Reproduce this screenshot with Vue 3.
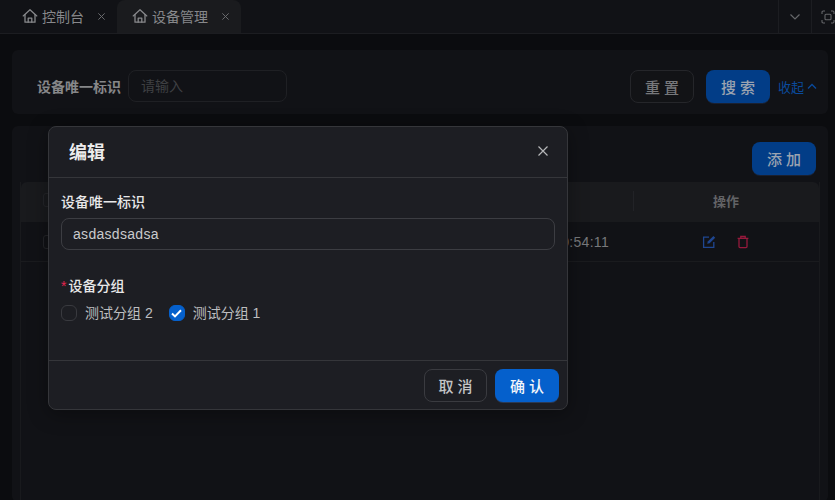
<script setup>
import { ref } from 'vue'
const name = ref('asdasdsadsa')
const groups = [
  { label: '测试分组 2', on: false },
  { label: '测试分组 1', on: true }
]
const tabs = [
  { label: '控制台', active: false },
  { label: '设备管理', active: true }
]
</script>

<template>
  <div class="page">
    <header class="tabbar">
      <div class="tabs">
        <div v-for="t in tabs" :key="t.label" class="tab" :class="{ active: t.active }">
          <svg class="home" viewBox="0 0 16 16" fill="none" stroke="currentColor" stroke-width="1.3" stroke-linejoin="round" stroke-linecap="round">
            <path d="M1.2 7.9 8 1.8l6.8 6.1" />
            <path d="M3 6.6v7.6h10V6.6" />
            <path d="M6.2 14.2V10.2h3.6v4" />
          </svg>
          <span class="tab-label">{{ t.label }}</span>
          <svg class="tab-x" viewBox="0 0 10 10" fill="none" stroke="currentColor" stroke-width="1.1"><path d="M1.5 1.5l7 7M8.5 1.5l-7 7" /></svg>
        </div>
      </div>
      <div class="tools">
        <div class="tool">
          <svg width="12" height="8" viewBox="0 0 12 8" fill="none" stroke="currentColor" stroke-width="1.2"><path d="M1.5 1.5 6 6l4.5-4.5" /></svg>
        </div>
        <div class="tool wide">
          <svg width="14" height="14" viewBox="0 0 14 14" fill="none" stroke="currentColor" stroke-width="1.1">
            <path d="M1 4V2.2C1 1.5 1.5 1 2.2 1H4M10 1h1.8c.7 0 1.2.5 1.2 1.2V4M13 10v1.8c0 .7-.5 1.2-1.2 1.2H10M4 13H2.2C1.5 13 1 12.5 1 11.8V10" />
            <rect x="4" y="4.2" width="6" height="5.6" rx="1" />
          </svg>
        </div>
      </div>
    </header>

    <main class="content">
      <section class="card search">
        <label class="search-label">设备唯一标识</label>
        <div class="search-input">请输入</div>
        <div class="search-actions">
          <button class="btn ghost">重 置</button>
          <button class="btn primary">搜 索</button>
          <span class="collapse">收起
            <svg width="10" height="7" viewBox="0 0 10 7" fill="none" stroke="currentColor" stroke-width="1.3"><path d="M1 5.5 5 1.5l4 4" /></svg>
          </span>
        </div>
      </section>

      <section class="card list">
        <div class="list-top"><button class="btn primary add">添 加</button></div>
        <div class="table">
          <div class="thead">
            <div class="cell check"><i class="box"></i></div>
            <div class="cell grow"></div>
            <div class="cell ops head-ops">操作</div>
          </div>
          <div class="trow">
            <div class="cell check"><i class="box"></i></div>
            <div class="cell grow time">2024-01-01 10:54:11</div>
            <div class="cell ops">
              <svg class="op" width="14" height="14" viewBox="0 0 14 14" fill="none" stroke="#1f4690" stroke-width="1.3">
                <path d="M7 2.2H1.6v10.2h10.2V7" />
                <path d="M5.2 8.8 5.8 6.5 11.4 .9l1.8 1.8L7.6 8.3z" fill="#1f4690" stroke="none" />
              </svg>
              <svg class="op" width="14" height="14" viewBox="0 0 14 14" fill="none" stroke="#96193c" stroke-width="1.3">
                <path d="M1.6 3.4h10.8M4.8 3.2V1.5h4.4v1.7M3 3.4v8.2c0 .6.4 1 1 1h6c.6 0 1-.4 1-1V3.4" />
              </svg>
            </div>
          </div>
        </div>
      </section>
    </main>

    <div class="modal">
      <div class="modal-head">
        <h2>编辑</h2>
        <svg class="modal-x" width="12" height="12" viewBox="0 0 12 12" fill="none" stroke="currentColor" stroke-width="1.2"><path d="M1.5 1.5l9 9M10.5 1.5l-9 9" /></svg>
      </div>
      <div class="modal-body">
        <div class="field">
          <div class="field-label">设备唯一标识</div>
          <div class="field-input">{{ name }}</div>
        </div>
        <div class="field second">
          <div class="field-label"><em>*</em>设备分组</div>
          <div class="checks">
            <label v-for="g in groups" :key="g.label" class="check-item">
              <span class="tick" :class="{ on: g.on }">
                <svg v-if="g.on" width="11" height="9" viewBox="0 0 11 9" fill="none" stroke="#fff" stroke-width="2"><path d="M1 4.5 4 7.4 10 1.3" /></svg>
              </span>
              {{ g.label }}
            </label>
          </div>
        </div>
      </div>
      <div class="modal-foot">
        <button class="btn m-ghost">取 消</button>
        <button class="btn m-primary">确 认</button>
      </div>
    </div>
  </div>
</template>

<style>
html, body { margin: 0; background: #0b0c0f; }
</style>

<style scoped>
.page {
  position: relative;
  width: 835px;
  height: 500px;
  overflow: hidden;
  background: #0b0c0f;
  font-family: "Liberation Sans", "Noto Sans CJK SC", sans-serif;
  font-size: 14px;
}
.tabbar {
  display: flex;
  justify-content: space-between;
  height: 33px;
  background: #111216;
  border-bottom: 1px solid #1c1d21;
}
.tabs { display: flex; }
.tab {
  display: flex;
  align-items: center;
  height: 33px;
  padding: 0 10px 1px 23px;
  color: #87888b;
  width: 116px;
  box-sizing: border-box;
}
.tab.active {
  width: 124px;
  margin-left: 1px;
  padding-left: 16px;
  padding-right: 11px;
  background: #1a1b1e;
  border-radius: 8px 8px 0 0;
}
.home { width: 16px; height: 16px; flex: none; margin: 0 4px 0 -1px; }
.tab-label { font-size: 14px; flex: 1; white-space: nowrap; }
.tab-x { width: 9px; height: 9px; flex: none; color: #6a6b6e; }
.tools { display: flex; }
.tool {
  width: 32px;
  display: flex;
  align-items: center;
  justify-content: center;
  border-left: 1px solid #1c1d21;
  color: #66676a;
}
.tool.wide { width: 24px; justify-content: flex-start; padding-left: 9px; box-sizing: border-box; }
.content {
  display: flex;
  flex-direction: column;
  gap: 12px;
  padding: 16px 7px 0 12px;
}
.card { background: #111216; border-radius: 6px; }
.search {
  display: flex;
  align-items: center;
  height: 64px;
  box-sizing: border-box;
  padding: 8px 11px 0 25px;
}
.search-label { color: #868789; font-weight: 700; font-size: 14px; margin-right: 7px; white-space: nowrap; }
.search-input {
  width: 159px;
  height: 32px;
  box-sizing: border-box;
  border: 1px solid #1f2024;
  border-radius: 8px;
  padding: 0 12px;
  line-height: 30px;
  color: #3f4043;
  font-size: 14px;
}
.search-actions { margin-left: auto; display: flex; align-items: center; gap: 12px; }
.btn {
  font: inherit;
  font-size: 15px;
  font-weight: 500;
  width: 64px;
  height: 33px;
  border-radius: 8px;
  border: 0;
  padding: 0;
  box-sizing: border-box;
}
.btn.ghost { background: #121316; border: 1px solid #25262a; color: #77787b; }
.btn.primary { background: #023d87; color: #9ba3b0; box-shadow: 0 1px 0 #1a2030; }
.collapse { display: flex; align-items: center; gap: 3px; margin-left: -4px; color: #0a4a9c; font-size: 13px; white-space: nowrap; }
.list {
  flex: 1;
  height: 370px;
  padding: 16px 8px 0;
}
.list-top { display: flex; justify-content: flex-end; padding-right: 4px; margin-bottom: 7px; }
.btn.add { height: 33px; }
.table { border-left: 1px solid #191a1d; border-right: 1px solid #191a1d; height: 320px; }
.thead, .trow { display: flex; align-items: center; }
.thead { height: 40px; padding-bottom: 4px; box-sizing: border-box; background: #191a1d; border-radius: 6px 6px 0 0; color: #626366; font-weight: 700; font-size: 13px; }
.trow { height: 39px; border-bottom: 1px solid #1a1b1e; color: #77787b; font-size: 14px; }
.cell.check { width: 44px; padding-left: 22px; box-sizing: border-box; }
.box { display: block; width: 14px; height: 14px; border: 1px solid #242529; border-radius: 3px; box-sizing: border-box; }
.cell.grow { flex: 1; }
.time { text-align: right; padding-right: 24px; white-space: nowrap; letter-spacing: .3px; }
.cell.ops { width: 186px; display: flex; justify-content: center; gap: 20px; }
.head-ops { position: relative; }
.head-ops::before {
  content: "";
  position: absolute;
  left: 0;
  top: 0;
  width: 1px;
  height: 20px;
  background: #222327;
}
.modal {
  position: absolute;
  left: 48px;
  top: 126px;
  width: 520px;
  height: 284px;
  box-sizing: border-box;
  background: #1d1e23;
  border: 1px solid #35363a;
  border-radius: 8px;
  display: flex;
  flex-direction: column;
  box-shadow: 0 4px 20px rgba(0,0,0,.35);
}
.modal-head {
  display: flex;
  align-items: center;
  justify-content: space-between;
  height: 51px;
  flex: none;
  box-sizing: border-box;
  padding: 0 18px 2px 20px;
  border-bottom: 1px solid #35363a;
}
.modal-head h2 { margin: 0; font-size: 18px; font-weight: 700; color: #ebebec; }
.modal-x { color: #b6b7b9; }
.modal-body { flex: 1; padding: 14px 12px 0; }
.field-label { color: #e8e8e9; font-size: 14px; font-weight: 500; line-height: 20px; }
.field-label em { color: #e5244f; font-style: normal; margin-right: 2px; }
.field-input {
  margin-top: 6px;
  height: 32px;
  box-sizing: border-box;
  border: 1px solid #3c3d42;
  border-radius: 8px;
  padding: 0 11px;
  line-height: 30px;
  color: #c9cacc;
  font-size: 14px;
  letter-spacing: .3px;
}
.field.second { margin-top: 26px; }
.checks { display: flex; gap: 16px; margin-top: 7px; }
.check-item { display: flex; align-items: center; gap: 8px; color: #bdbec0; font-size: 14px; line-height: 20px; white-space: nowrap; }
.tick {
  width: 16px;
  height: 16px;
  box-sizing: border-box;
  border: 1px solid #393a3f;
  border-radius: 6px;
  display: flex;
  align-items: center;
  justify-content: center;
}
.tick.on { background: #0560cc; border-color: #0560cc; }
.modal-foot {
  height: 49px;
  flex: none;
  box-sizing: border-box;
  display: flex;
  align-items: center;
  justify-content: flex-end;
  gap: 8px;
  padding: 0 8px;
  border-top: 1px solid #35363a;
}
.btn.m-ghost { width: 63px; background: #1d1e23; border: 1px solid #3a3b40; color: #c4c5c7; }
.btn.m-primary { background: #0560cc; color: #f2f5fa; box-shadow: 0 1px 0 #2b3a55; }
</style>
